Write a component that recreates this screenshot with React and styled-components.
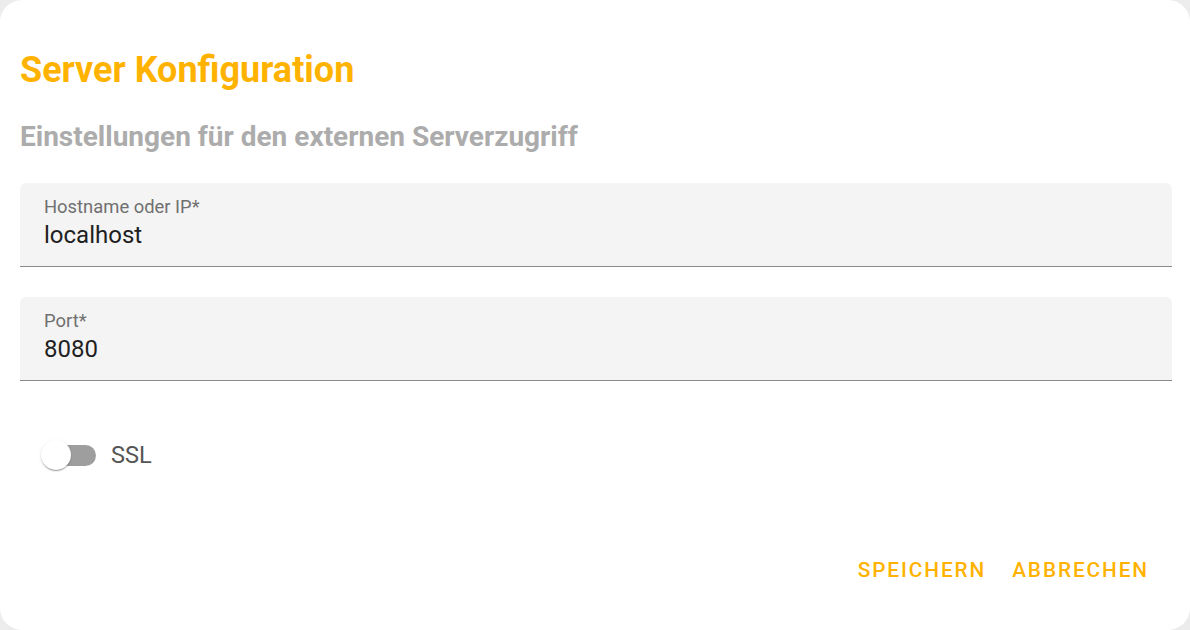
import React, { useState } from "react";
import styled, { createGlobalStyle } from "styled-components";

const Global = createGlobalStyle`
  html, body { margin: 0; padding: 0; background: #ececec; }
  body { font-family: Roboto, "Noto Sans", Arial, sans-serif; }
  * { box-sizing: border-box; }
`;

const Card = styled.div`
  width: 1190px;
  height: 630px;
  background: #fff;
  border-radius: 22px;
  overflow: hidden;
  display: flex;
  flex-direction: column;
  padding: 48px 18px 0 20px;
`;

const Title = styled.h2`
  margin: 0;
  font-size: 36px;
  font-weight: 700;
  color: #ffb300;
  line-height: 44px;
`;

const Subtitle = styled.h3`
  margin: 28px 0 0;
  font-size: 28px;
  font-weight: 700;
  color: #acacac;
  line-height: 34px;
`;

const Fields = styled.div`
  display: flex;
  flex-direction: column;
  gap: 30px;
  margin-top: 29px;
`;

const Field = styled.div`
  height: 84px;
  background: #f4f4f4;
  border-radius: 6px 6px 0 0;
  border-bottom: 1px solid #8a8a8a;
  padding: 13px 24px 0;
  display: flex;
  flex-direction: column;
`;

const Label = styled.label`
  font-size: 18.4px;
  color: #707070;
  line-height: 22px;
`;

const Value = styled.div`
  font-size: 24px;
  color: #1f1f1f;
  line-height: 32px;
  margin-top: 1px;
`;

const SwitchRow = styled.label`
  display: flex;
  align-items: center;
  gap: 15px;
  margin: 60px 0 0 26px;
  cursor: pointer;
`;

const Track = styled.span`
  position: relative;
  width: 50px;
  height: 21px;
  border-radius: 11px;
  background: ${(p) => (p.$on ? "#ffd966" : "#9e9e9e")};
`;

const Thumb = styled.span`
  position: absolute;
  top: -5px;
  left: ${(p) => (p.$on ? "25px" : "-5px")};
  width: 30px;
  height: 30px;
  border-radius: 50%;
  background: ${(p) => (p.$on ? "#ffb300" : "#fff")};
  box-shadow: 0 2px 1px -1px rgba(0,0,0,0.2), 0 1px 1px 0 rgba(0,0,0,0.14), 0 1px 3px 0 rgba(0,0,0,0.12);
`;

const SwitchText = styled.span`
  font-size: 23.6px;
  color: #555;
`;

const Actions = styled.div`
  display: flex;
  justify-content: flex-end;
  gap: 26px;
  margin-top: 89px;
  padding-right: 23px;
`;

const Button = styled.button`
  border: none;
  background: none;
  padding: 0;
  font-family: inherit;
  font-size: 20.8px;
  font-weight: 500;
  letter-spacing: 1.9px;
  color: #ffb300;
  text-transform: uppercase;
  cursor: pointer;
`;

export default function App() {
  const [ssl, setSsl] = useState(false);
  return (
    <>
      <Global />
      <Card>
        <Title>Server Konfiguration</Title>
        <Subtitle>Einstellungen für den externen Serverzugriff</Subtitle>
        <Fields>
          <Field>
            <Label>Hostname oder IP*</Label>
            <Value>localhost</Value>
          </Field>
          <Field>
            <Label>Port*</Label>
            <Value>8080</Value>
          </Field>
        </Fields>
        <SwitchRow onClick={() => setSsl(!ssl)}>
          <Track $on={ssl}>
            <Thumb $on={ssl} />
          </Track>
          <SwitchText>SSL</SwitchText>
        </SwitchRow>
        <Actions>
          <Button>Speichern</Button>
          <Button>Abbrechen</Button>
        </Actions>
      </Card>
    </>
  );
}
